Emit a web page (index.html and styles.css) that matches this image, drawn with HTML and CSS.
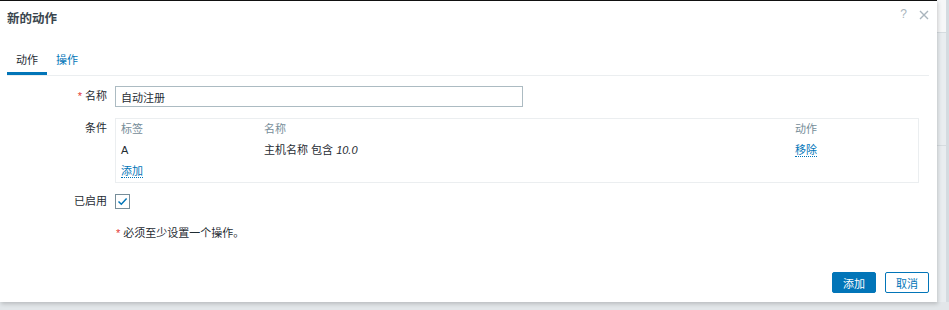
FILE: index.html
```html
<!DOCTYPE html>
<html lang="zh">
<head>
<meta charset="utf-8">
<title>新的动作</title>
<link rel="stylesheet" href="styles.css">
</head>
<body>
<div class="page">
  <div class="dialog">
    <div class="dialog-header">
      <h4 class="dialog-title">新的动作</h4>
      <div class="header-controls">
        <span class="btn-help">?</span>
        <span class="btn-close">
          <svg width="10" height="10" viewBox="0 0 10 10"><path d="M1 1 L9 9 M9 1 L1 9" stroke="#aab5bd" stroke-width="1.4" fill="none"/></svg>
        </span>
      </div>
    </div>
    <div class="tabs">
      <span class="tab active">动作</span>
      <span class="tab">操作</span>
    </div>
    <div class="form">
      <div class="label row-name"><span class="req">*</span> 名称</div>
      <div class="field row-name"><input class="text-input" type="text" value="自动注册"></div>

      <div class="label row-cond">条件</div>
      <div class="field row-cond">
        <div class="cond-box">
          <table class="cond-table">
            <tr class="head"><td class="c1">标签</td><td class="c2">名称</td><td class="c3">动作</td></tr>
            <tr class="item"><td class="c1">A</td><td class="c2">主机名称 包含 <em>10.0</em></td><td class="c3"><span class="link">移除</span></td></tr>
            <tr class="add"><td colspan="3"><span class="link">添加</span></td></tr>
          </table>
        </div>
      </div>

      <div class="label row-en">已启用</div>
      <div class="field row-en">
        <span class="checkbox"><svg width="11" height="9" viewBox="0 0 11 9"><path d="M1.5 4.5 L4.3 7.2 L9.6 1.6" stroke="#0275b8" stroke-width="1.5" fill="none"/></svg></span>
      </div>

      <div class="label row-note"></div>
      <div class="field row-note note"><span class="req">*</span> 必须至少设置一个操作。</div>
    </div>
    <div class="footer">
      <button class="btn primary">添加</button>
      <button class="btn secondary">取消</button>
    </div>
  </div>
  <div class="side">
    <div class="side-top"></div>
    <div class="side-mid"></div>
    <div class="side-rest"></div>
  </div>
</div>
<div class="bottom-shade"></div>
</body>
</html>
```
FILE: styles.css
```css
html, body {
  margin: 0;
  padding: 0;
}
body {
  width: 949px;
  height: 310px;
  overflow: hidden;
  background: #e4e8eb;
  font-family: "Liberation Sans", Arial, "Noto Sans CJK SC", sans-serif;
  font-size: 11px;
  color: #1f2c33;
}
.page {
  display: flex;
  height: 302px;
}
.dialog {
  width: 937px;
  height: 302px;
  box-sizing: border-box;
  background: #fff;
  border-top: 1px solid #111;
  padding: 0 8px 0 7px;
  display: flex;
  flex-direction: column;
  box-shadow: 1px 2px 4px rgba(0, 0, 0, 0.18);
  position: relative;
  z-index: 1;
}
.dialog-header {
  display: flex;
  justify-content: space-between;
  height: 36px;
}
.dialog-title {
  margin: 0;
  font-size: 12.5px;
  font-weight: bold;
  line-height: 36px;
  color: #3a464e;
}
.header-controls {
  display: flex;
  gap: 12px;
  padding-top: 6px;
  align-items: center;
  height: 14px;
}
.btn-help {
  color: #aab5bd;
  font-size: 12px;
  line-height: 14px;
}
.btn-close {
  display: flex;
  margin-top: 1px;
}
.tabs {
  margin-top: 11px;
  display: flex;
  border-bottom: 1px solid #ebeef0;
}
.tab {
  padding: 0 9px;
  line-height: 24px;
  border-bottom: 3px solid transparent;
  color: #0275b8;
}
.tab.active {
  color: #1f2c33;
  border-bottom-color: #0275b8;
}
.form {
  display: grid;
  grid-template-columns: 100px 1fr;
  column-gap: 8px;
  align-items: start;
  margin-top: 10px;
  margin-right: 10px;
}
.label {
  text-align: right;
  line-height: 21px;
  white-space: nowrap;
}
.req {
  color: #e33734;
}
.row-cond {
  margin-top: 11px;
}
.row-en {
  margin-top: 10px;
}
.label.row-en {
  line-height: 17px;
}
.row-note {
  margin-top: 14px;
}
.text-input {
  display: block;
  width: 408px;
  height: 21px;
  box-sizing: border-box;
  border: 1px solid #acbbc2;
  padding: 0 5px;
  margin: 0;
  font-family: inherit;
  font-size: 11px;
  color: #1f2c33;
  background: #fff;
}
.cond-box {
  border: 1px solid #ebeef0;
  padding: 0 5px 2px;
}
.cond-table {
  width: 100%;
  border-collapse: collapse;
}
.cond-table td {
  padding: 0;
  vertical-align: middle;
  line-height: 16px;
}
.cond-table .c1 {
  width: 143px;
}
.cond-table .c3 {
  width: 118px;
}
.head td {
  height: 20px;
  color: #768d99;
}
.item td {
  height: 22px;
}
.add td {
  height: 19px;
}
.link {
  color: #0275b8;
  border-bottom: 1px dotted #0275b8;
}
.checkbox {
  display: flex;
  align-items: center;
  justify-content: center;
  width: 15px;
  height: 15px;
  box-sizing: border-box;
  border: 1px solid #768d99;
  margin-top: 1px;
  background: #fff;
}
.note {
  line-height: 18px;
  padding-left: 1px;
}
.label.row-note {
  height: 18px;
}
.footer {
  margin-top: auto;
  display: flex;
  justify-content: flex-end;
  gap: 9px;
  padding-bottom: 9px;
}
.btn {
  height: 21px;
  width: 44px;
  box-sizing: border-box;
  font-family: inherit;
  font-size: 11px;
  padding: 0;
  border-radius: 2px;
  cursor: pointer;
}
.btn.primary {
  background: #0275b8;
  border: 1px solid #0275b8;
  color: #fff;
}
.btn.secondary {
  background: #fff;
  border: 1px solid #0275b8;
  color: #0275b8;
}
.side {
  flex: 1;
  display: flex;
  flex-direction: column;
  background: #eef1f3;
  border-right: 3px solid #d4dbe0;
}
.side-top {
  height: 32px;
  background: #f6f7f8;
  border-bottom: 1px solid #d6dce0;
}
.side-mid {
  height: 112px;
  background: #e9edf0;
  border-bottom: 1px solid #d6dce0;
}
.side-rest {
  flex: 1;
  background: #e9edf0;
}
.bottom-shade {
  height: 8px;
  background: #e2e6e9;
}
```
